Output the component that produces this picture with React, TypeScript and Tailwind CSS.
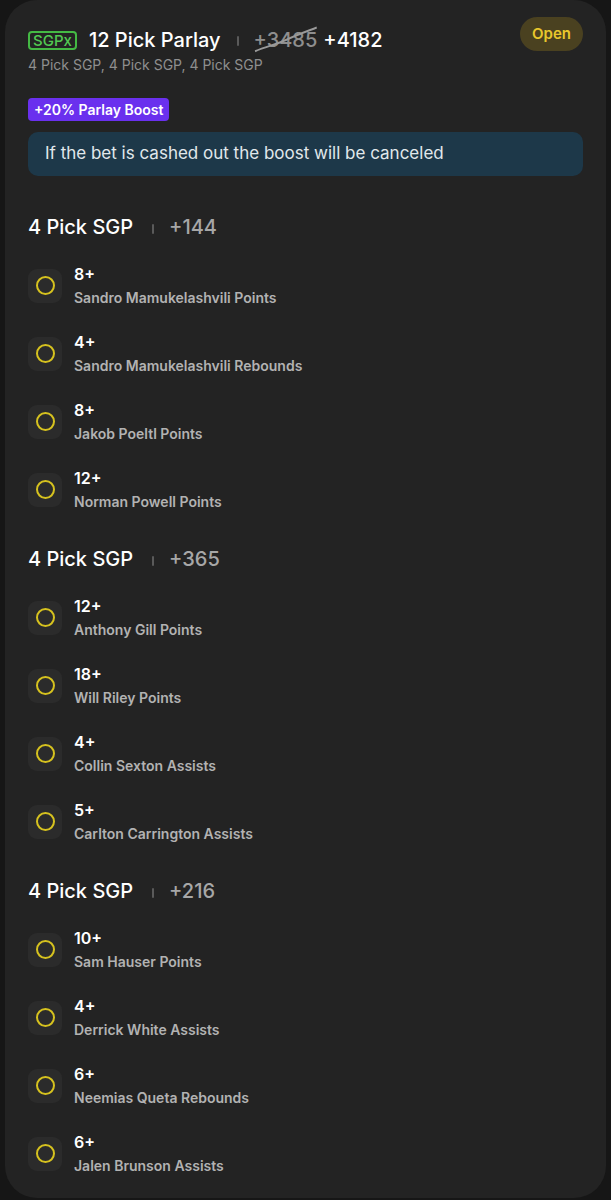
const sections = [
  {
    odds: '+144',
    legs: [
      { line: '8+', name: 'Sandro Mamukelashvili Points' },
      { line: '4+', name: 'Sandro Mamukelashvili Rebounds' },
      { line: '8+', name: 'Jakob Poeltl Points' },
      { line: '12+', name: 'Norman Powell Points' },
    ],
  },
  {
    odds: '+365',
    legs: [
      { line: '12+', name: 'Anthony Gill Points' },
      { line: '18+', name: 'Will Riley Points' },
      { line: '4+', name: 'Collin Sexton Assists' },
      { line: '5+', name: 'Carlton Carrington Assists' },
    ],
  },
  {
    odds: '+216',
    legs: [
      { line: '10+', name: 'Sam Hauser Points' },
      { line: '4+', name: 'Derrick White Assists' },
      { line: '6+', name: 'Neemias Queta Rebounds' },
      { line: '6+', name: 'Jalen Brunson Assists' },
    ],
  },
]

function Sep() {
  return <span className="mx-[15px] inline-block w-[2px] h-[10px] rounded-full bg-[#5a5a5a]" aria-hidden />
}

function Leg({ line, name }: { line: string; name: string }) {
  return (
    <div className="flex items-center">
      <div className="w-[34px] h-[34px] rounded-[9px] bg-[#2b2b2b] flex items-center justify-center">
        <span className="w-[19px] h-[19px] rounded-full border-2 border-[#d6c21f]" />
      </div>
      <div className="ml-[12px] flex flex-col">
        <span className="text-[16px] leading-[22px] font-semibold text-white">{line}</span>
        <span className="mt-[3px] text-[14px] leading-[20px] font-semibold text-[#b2b2b2]">{name}</span>
      </div>
    </div>
  )
}

export default function App() {
  return (
    <div
      className="w-[611px] min-h-[1200px] bg-[#161616] px-[5px] pb-[3px]"
      style={{ fontFamily: 'Inter, "Noto Sans", sans-serif' }}
    >
      <div className="rounded-[32px] bg-[#232323] pt-[17px] px-[23px] pb-[22px]">
        <div className="flex justify-between items-start">
          <div>
            <div className="mt-[11px] h-[24px] flex items-center">
              <span className="h-[19px] px-[3px] flex items-center rounded-[4px] border-2 border-[#44b944] text-[#52c952] text-[15px] font-medium leading-none">
                SGPx
              </span>
              <span className="ml-[12px] text-[20px] font-medium text-white">12 Pick Parlay</span>
              <span className="ml-[1px]">
                <Sep />
              </span>
              <span className="relative text-[20px] font-medium text-[#8e8e8e]">
                +3485
                <svg className="absolute left-0 top-0 w-full h-full" viewBox="0 0 60 24" preserveAspectRatio="none" aria-hidden>
                  <path d="M1 21 C 12 17, 20 16, 30 12 S 50 5, 59 2" stroke="#9a9a9a" strokeWidth="1.6" fill="none" />
                </svg>
              </span>
              <span className="ml-[6px] text-[20px] font-medium text-white">+4182</span>
            </div>
            <div className="mt-[4px] text-[14px] leading-[18px] text-[#8f8f8f]">4 Pick SGP, 4 Pick SGP, 4 Pick SGP</div>
          </div>
          <span className="h-[34px] px-[12px] rounded-full bg-[#4a4120] text-[#e8c72c] text-[15px] font-semibold flex items-center">
            Open
          </span>
        </div>

        <div className="mt-[23px]">
          <span className="inline-flex h-[23px] items-center px-[6px] rounded-[4px] bg-[#6a30ee] text-white text-[14px] font-semibold">
            +20% Parlay Boost
          </span>
        </div>
        <div className="mt-[11px] h-[44px] rounded-[10px] bg-[#1d3849] flex items-center px-[17px] text-[17px] text-[#e1e8ec]">
          If the bet is cashed out the boost will be canceled
        </div>

        {sections.map((s, i) => (
          <div key={i} className={i === 0 ? 'mt-[37px]' : 'mt-[33px]'}>
            <div className="h-[28px] flex items-center text-[20px] font-medium">
              <span className="text-white">4 Pick SGP</span>
              <span className="ml-[4px]">
                <Sep />
              </span>
              <span className="text-[#a7a7a7]">{s.odds}</span>
            </div>
            <div className="mt-[22px] flex flex-col gap-[23px]">
              {s.legs.map((l, j) => (
                <Leg key={j} line={l.line} name={l.name} />
              ))}
            </div>
          </div>
        ))}
      </div>
    </div>
  )
}
